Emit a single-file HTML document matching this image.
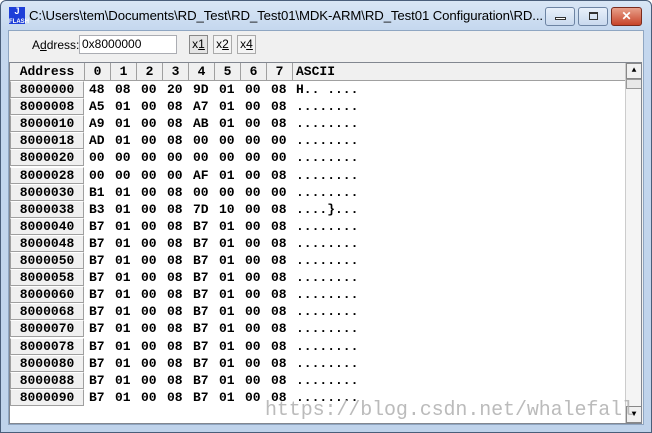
<!DOCTYPE html>
<html><head><style>
*{margin:0;padding:0;box-sizing:border-box}
body{width:652px;height:433px;overflow:hidden;background:#fff;font-family:"Liberation Sans",sans-serif;position:relative}
.frame{position:absolute;left:0;top:0;width:652px;height:433px;border:1px solid #4a5e7a;border-radius:6px 6px 0 0;background:linear-gradient(#d9e6f5,#c4d7ee 30px,#bfd3eb)}
.client{position:absolute;left:8px;top:30px;width:636px;height:395px;background:#f0f0f0;border:1px solid #8fa6c2}
.abs{position:absolute}
.title{left:29px;top:8px;font-size:13.2px;color:#000;white-space:nowrap;letter-spacing:-0.1px}
.btn{top:7px;height:19px;border:1px solid #6d84a3;border-radius:3px;background:linear-gradient(#e8f0fa,#c9d9ee)}
.grid{position:absolute;left:9px;top:62px;width:633px;height:362px;background:#fff;border:1px solid #828790;overflow:hidden}
.mono{font-family:"Liberation Mono",monospace;font-weight:bold;font-size:13px}
.hdr{position:absolute;top:0;height:18px;background:#f0f0f0;border-right:1px solid #a0a0a0;border-bottom:1px solid #a0a0a0;line-height:17px;text-align:center}
.ad{position:absolute;left:0;width:74px;height:17px;background:#f0f0f0;border:1px solid #a0a0a0;border-top:1px solid #fff;text-align:center}
.cell{position:absolute}
</style></head><body>
<div class="frame"></div>
<div class="abs" style="left:9px;top:7px;width:16px;height:17px;background:#1e3fd8;color:#fff;font:bold 9px 'Liberation Sans';text-align:center;line-height:9px">J<br><span style="font-size:6px">FLASH</span></div>
<div class="abs title">C:\Users\tem\Documents\RD_Test\RD_Test01\MDK-ARM\RD_Test01 Configuration\RD...</div>
<div class="abs btn" style="left:545px;width:30px"><div class="abs" style="left:9px;top:9px;width:11px;height:3px;border:1px solid #333;background:#fff"></div></div>
<div class="abs btn" style="left:578px;width:30px"><div class="abs" style="left:10px;top:4px;width:9px;height:8px;border:1px solid #333;border-top-width:2px"></div></div>
<div class="abs btn" style="left:611px;width:31px;background:linear-gradient(#e8a08a,#c7442a);border-color:#7a2a1c;color:#fff;font:bold 12px 'Liberation Sans';text-align:center;line-height:17px">✕</div>
<div class="client"></div>
<div class="abs" style="left:32px;top:38px;font-size:12px">A<u>d</u>dress:</div>
<div class="abs" style="left:79px;top:35px;width:98px;height:19px;background:#fff;border:1px solid #abadb3;font-size:12px;padding:2px 2px;line-height:13px">0x8000000</div>
<div class="abs" style="left:189px;top:35px;width:19px;height:19px;border:1px solid #888;background:#e4e4e4;font-size:12px;text-align:center;line-height:17px">x<u>1</u></div>
<div class="abs" style="left:213px;top:35px;width:19px;height:19px;border:1px solid #aaa;background:#f4f4f4;font-size:12px;text-align:center;line-height:17px">x<u>2</u></div>
<div class="abs" style="left:237px;top:35px;width:19px;height:19px;border:1px solid #aaa;background:#f4f4f4;font-size:12px;text-align:center;line-height:17px">x<u>4</u></div>
<div class="grid mono">
<div class="hdr" style="left:0;width:75px">Address</div>
<div class="hdr" style="left:75px;width:26px">0</div>
<div class="hdr" style="left:101px;width:26px">1</div>
<div class="hdr" style="left:127px;width:26px">2</div>
<div class="hdr" style="left:153px;width:26px">3</div>
<div class="hdr" style="left:179px;width:26px">4</div>
<div class="hdr" style="left:205px;width:26px">5</div>
<div class="hdr" style="left:231px;width:26px">6</div>
<div class="hdr" style="left:257px;width:26px">7</div>
<div class="hdr" style="left:283px;width:333px;text-align:left;padding-left:3px">ASCII</div>
<div class="abs" style="left:615px;top:0;width:17px;height:361px;background:#f4f4f4;border-left:1px solid #ccc"></div>
<div class="abs" style="left:616px;top:0;width:16px;height:16px;border:1px solid #888;background:#f0f0f0;font-size:8px;text-align:center;line-height:14px">▲</div>
<div class="abs" style="left:616px;top:16px;width:16px;height:10px;border:1px solid #999;background:#e8e8e8"></div>
<div class="abs" style="left:616px;top:343px;width:16px;height:17px;border:1px solid #888;background:#f0f0f0;font-size:8px;text-align:center;line-height:15px">▼</div>
<div id="rows"></div>
</div>
<div class="abs" style="left:265px;top:399px;font:20px 'Liberation Mono',monospace;color:rgba(175,175,175,0.85);white-space:nowrap;letter-spacing:-0.1px">https://blog.csdn.net/whalefall</div>
<script>
var d=[["8000000","48 08 00 20 9D 01 00 08","H.. ...."],["8000008","A5 01 00 08 A7 01 00 08","........"],["8000010","A9 01 00 08 AB 01 00 08","........"],["8000018","AD 01 00 08 00 00 00 00","........"],["8000020","00 00 00 00 00 00 00 00","........"],["8000028","00 00 00 00 AF 01 00 08","........"],["8000030","B1 01 00 08 00 00 00 00","........"],["8000038","B3 01 00 08 7D 10 00 08","....}..."]];
var a=["8000040","8000048","8000050","8000058","8000060","8000068","8000070","8000078","8000080","8000088","8000090"];
a.forEach(function(x){d.push([x,"B7 01 00 08 B7 01 00 08","........"])});
var h="";
d.forEach(function(r,i){var t=18+i*17.1;h+='<div class="ad" style="top:'+t+'px;line-height:15px">'+r[0]+'</div>';
var b=r[1].split(" ");b.forEach(function(v,j){h+='<div class="cell" style="left:'+(79+j*26)+'px;top:'+t+'px;line-height:17px">'+v+'</div>'});
h+='<div class="cell" style="left:286px;top:'+t+'px;line-height:17px;white-space:pre">'+r[2]+'</div>';});
document.getElementById("rows").innerHTML=h;
</script>
</body></html>
